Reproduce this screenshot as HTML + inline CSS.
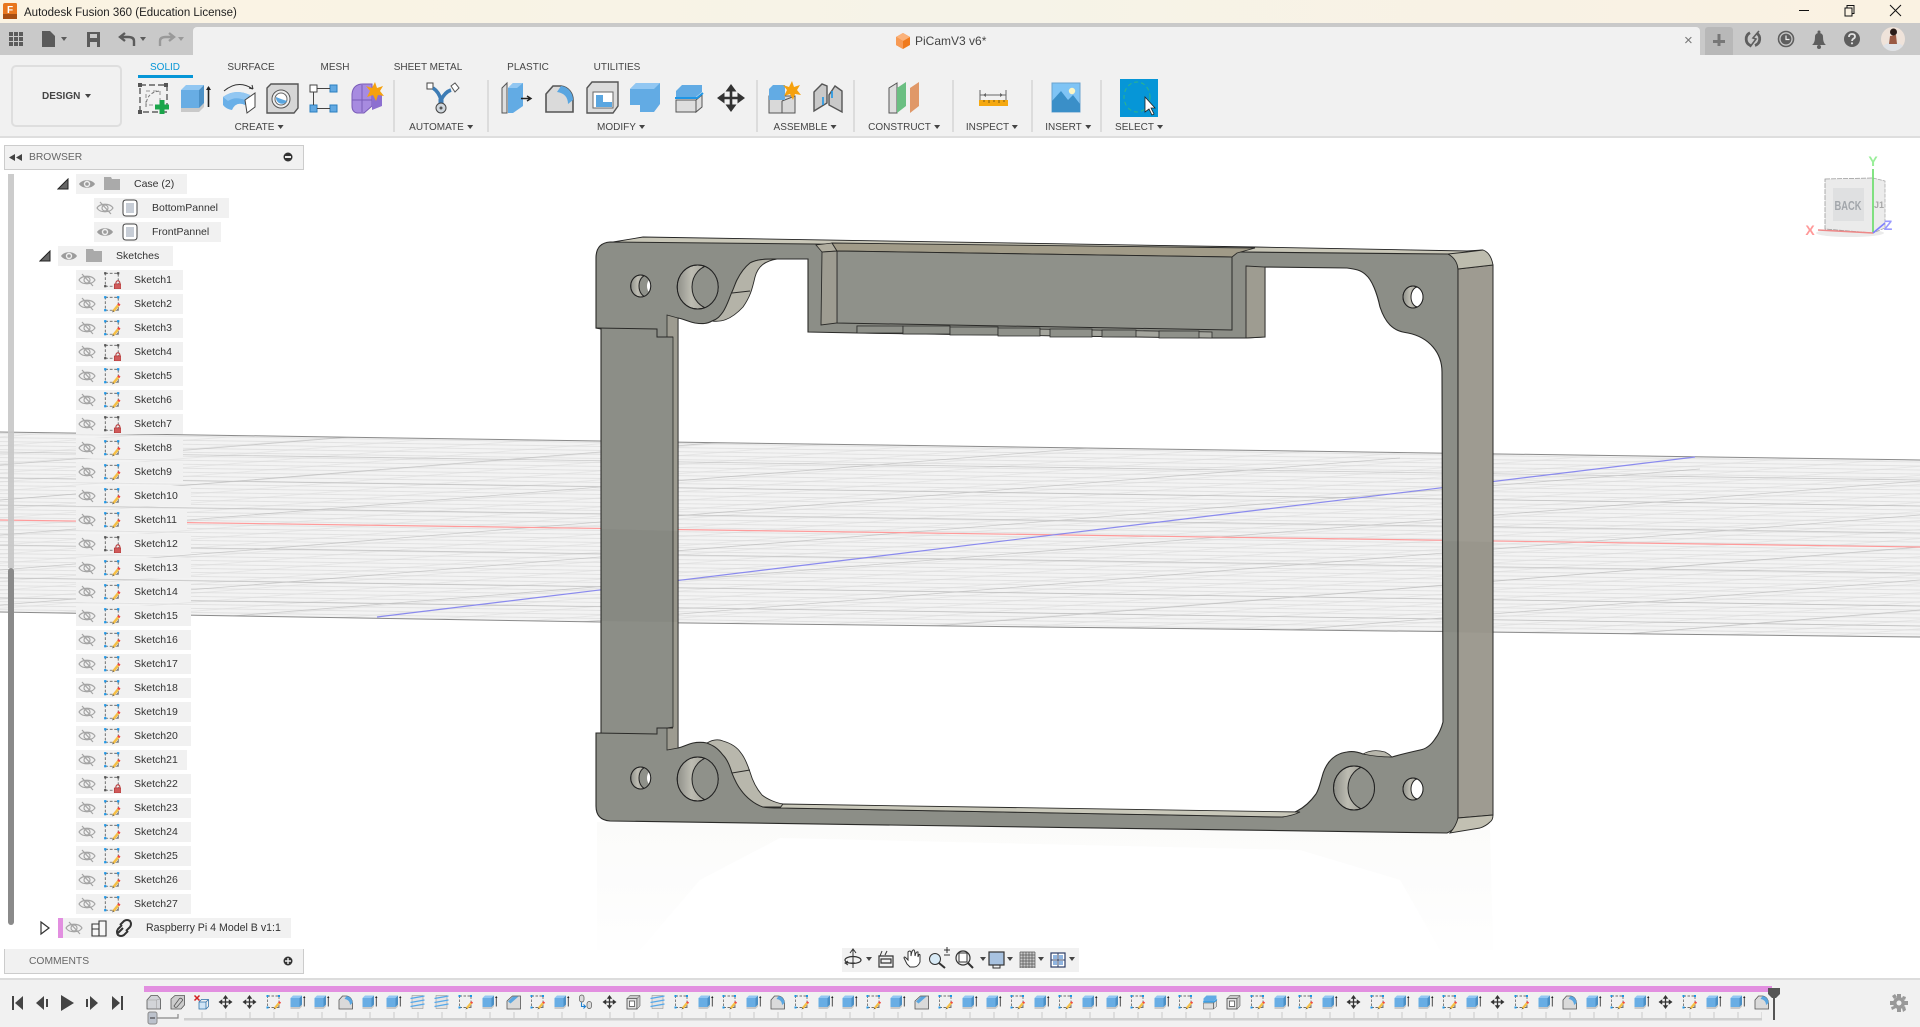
<!DOCTYPE html>
<html><head><meta charset="utf-8"><title>Autodesk Fusion 360 (Education License)</title>
<style>
html,body{margin:0;padding:0;width:1920px;height:1027px;overflow:hidden;background:#fff;font-family:"Liberation Sans",sans-serif}
.a{position:absolute}
svg{position:absolute;left:0;top:0}
.r{position:absolute;height:20px;line-height:21px;background:#f1f1f1;font-size:10.5px;color:#333;white-space:nowrap}
.s{left:76px;padding-left:58px;box-sizing:border-box;width:107px}
.w{width:115px}.v{width:111px}
.t{position:absolute;top:62px;font-size:10px;line-height:12px;color:#444;transform:translateX(-50%);white-space:nowrap}
.l{position:absolute;top:122px;font-size:10px;line-height:12px;color:#444;transform:translateX(-50%);white-space:nowrap}
.c{display:inline-block;width:0;height:0;border-left:3px solid transparent;border-right:3px solid transparent;border-top:4px solid #444;margin-left:3px;vertical-align:1px}
</style></head><body>

<svg width="1920" height="1027" viewBox="0 0 1920 1027">
<defs>
<clipPath id="band"><path d="M0 432L600 441L1920 460V637L600 622L0 612z"/></clipPath>
<pattern id="pa" width="40" height="4" patternUnits="userSpaceOnUse" patternTransform="rotate(0.85)"><rect width="40" height="4" fill="#f3f3f3"/><rect y="1" width="40" height="1" fill="#e2e2e2"/></pattern>
<pattern id="pb" width="40" height="9" patternUnits="userSpaceOnUse" patternTransform="rotate(-4.5)"><rect y="3" width="40" height="1" fill="#dadada" fill-opacity=".5"/></pattern>
<linearGradient id="refl" x1="0" y1="0" x2="0" y2="1"><stop offset="0" stop-color="#fbfbfa"/><stop offset="1" stop-color="#fefefe"/></linearGradient>
<linearGradient id="wall" x1="0" y1="0" x2="1" y2="0"><stop offset="0" stop-color="#8f9089"/><stop offset=".35" stop-color="#bdbcb2"/><stop offset=".7" stop-color="#a3a299"/><stop offset="1" stop-color="#8f9089"/></linearGradient>
<clipPath id="h1"><ellipse cx="697.7" cy="287" rx="20.5" ry="22"/></clipPath>
<clipPath id="h2"><ellipse cx="697.7" cy="779" rx="20.5" ry="22"/></clipPath>
<clipPath id="h3"><ellipse cx="1354" cy="788" rx="20.5" ry="22"/></clipPath>
<clipPath id="s1"><ellipse cx="640.7" cy="286" rx="10" ry="11"/></clipPath>
<clipPath id="s2"><ellipse cx="640.7" cy="778" rx="10" ry="11"/></clipPath>
<clipPath id="s3"><ellipse cx="1413" cy="297" rx="10" ry="11"/></clipPath>
<clipPath id="s4"><ellipse cx="1413" cy="789" rx="10" ry="11"/></clipPath>
</defs>

<!-- ground grid -->
<g clip-path="url(#band)">
<rect x="0" y="420" width="1920" height="230" fill="url(#pa)"/>
<rect x="0" y="420" width="1920" height="230" fill="url(#pb)"/>
<g stroke="#a8a8a8" stroke-width=".8" fill="none" opacity=".55">
<path d="M0 465L500 425M0 500L800 436M0 535L1100 447M0 570L1400 458M0 605L1700 469M120 625L1920 481M480 630L1920 515M860 632L1920 547M1240 634L1920 580M1600 636L1920 610"/>
<path d="M0 452L1920 480M0 478L1920 506M0 505L1920 533M0 545L1920 573M0 578L1920 606M0 598L1920 626"/>
</g>
</g>
<path d="M0 432L600 441L1920 460" fill="none" stroke="#8a8a8a" stroke-width="1"/>
<path d="M0 612L600 622L1920 637" fill="none" stroke="#8a8a8a" stroke-width="1"/>
<path d="M0 520L1920 547" stroke="#ff9a9a" stroke-width="1.2" fill="none"/>
<path d="M377 617L1695 457" stroke="#8a8aee" stroke-width="1.2" fill="none"/>

<!-- reflection -->
<path d="M597 822L1490 830L1493 950L1440 950L1400 880L1300 850L780 838L700 880L640 950L597 950z" fill="url(#refl)"/>

<!-- top surface -->
<path d="M607 243L643 237L1255 247L1467 251L1483 250L1448 255z" fill="#c9c7b8" stroke="#222" stroke-width=".9"/>
<!-- front face -->
<path fill-rule="evenodd" fill="#8c8e87" stroke="#2a2a28" stroke-width="1.1" d="M596 258Q596 243 610 242L813 244L1237 252L1448 254Q1458 258 1458 270L1458 818Q1457 829 1447 833L610 821Q596 820 596 806L596 733L601 733L601 329L596 328z
M678 318C684 319 689 322 695 323C702 324 707 324 712 321C718 319 720 316 723 312C727 306 729 299 732 292C734 288 735 284 737 280C741 272 745 267 750 263C757 259 767 259 777 259L808 259L808 332L857 333L1212 338L1246 338L1265 337L1265 267L1347 268C1355 269 1361 270 1366 275C1372 280 1377 293 1380 307C1383 316 1386 321 1390 325C1396 331 1402 332 1408 333C1418 335 1427 340 1433 347C1439 354 1442 362 1442 372L1443 722C1441 730 1438 735 1435 739C1431 745 1426 749 1420 750C1411 752 1402 754 1392 757C1384 756 1374 755 1363 754C1358 752 1352 751 1347 752C1339 753 1333 757 1329 762C1325 767 1323 773 1322 777C1320 784 1319 789 1316 794C1311 801 1305 807 1297 811C1293 813 1288 816 1282 817L780 808C773 808 768 808 763 807C754 804 746 797 741 790C737 785 734 778 732 773C730 766 727 759 723 755C717 747 712 745 707 743C702 742 698 742 693 743C688 744 683 747 678 748z"/>

<!-- left strip details -->
<path d="M667 315L678 318V748L667 750V728L673 727V337H667z" fill="#9d9b90" stroke="#2a2a28" stroke-width=".8"/>
<path d="M596 328L657 329V337H673M596 733L657 734V728H673" fill="none" stroke="#2a2a28" stroke-width="1"/>
<path d="M601 329V733" stroke="#2a2a28" stroke-width="1"/>
<!-- fillet walls -->
<path d="M712 321C720 322 730 321 743 307C750 297 752 290 755 277C758 266 765 261 777 259C767 259 757 259 750 263C745 267 741 272 737 280C735 284 734 288 732 292C729 299 727 306 723 312C720 316 718 319 712 321Z" fill="#b4b3a8" stroke="#2a2a28" stroke-width=".9"/>
<path d="M732 293L750 291" stroke="#2a2a28" stroke-width=".9"/>
<path d="M707 743C712 740 718 739 723 741C730 743 737 747 741 753C745 758 748 766 750 772C752 779 756 788 762 795C767 799 776 803 783 804L786 807L763 807C754 804 746 797 741 790C737 785 734 778 732 773C730 766 727 759 723 755C717 747 712 745 707 743Z" fill="#b8b7ac" stroke="#2a2a28" stroke-width=".9"/>
<path d="M732 773L750 770" stroke="#2a2a28" stroke-width=".9"/>
<!-- bottom inner light strip -->
<path d="M783 804L1300 812C1296 814 1290 816 1282 817L780 808z" fill="#c9c8ba" stroke="#2a2a28" stroke-width=".9"/>
<!-- bottom right small wall -->
<path d="M1363 754C1370 750 1378 750 1385 752C1389 754 1391 756 1392 757C1384 757 1372 756 1363 754Z" fill="#b8b7ac" stroke="#2a2a28" stroke-width=".8"/>

<!-- slot -->
<path d="M816 245L832 243L837 251L822 252z" fill="#b0ad9e" stroke="#2a2a28" stroke-width=".8"/>
<path d="M832 243L1255 248L1237 253L1232 257L837 251z" fill="#a19b88" stroke="#2a2a28" stroke-width=".9"/>
<path d="M837 251L1232 257V330L837 323z" fill="#8f918a" stroke="#2a2a28" stroke-width="1"/>
<path d="M822 252L837 251V323L821 325z" fill="#9e9c91" stroke="#2a2a28" stroke-width=".9"/>
<path d="M1246 266L1265 267V337L1246 338z" fill="#9e9c91" stroke="#2a2a28" stroke-width=".9"/>
<!-- teeth -->
<path d="M857 326L1212 332V338L857 333z" fill="#a4a59d" stroke="#2a2a28" stroke-width=".8"/>
<g fill="#8f918a" stroke="#2a2a28" stroke-width=".8">
<path d="M857 326H903V333H857z"/><path d="M903 326H950V334H903z"/><path d="M950 327H998V335H950z"/><path d="M998 328H1040V336H998z"/><path d="M1050 329H1092V337H1050z"/><path d="M1102 330H1136V337H1102z"/><path d="M1159 331H1199V338H1159z"/>
</g>
<!-- right wall -->
<path d="M1458 269L1493 265V815L1458 818z" fill="#9e9b91" stroke="#2a2a28" stroke-width="1"/>
<path d="M1448 254L1467 252L1483 250Q1491 253 1493 265L1458 269Q1457 259 1448 254z" fill="#bdbcae" stroke="#2a2a28" stroke-width=".9"/>
<path d="M1458 818L1493 815Q1493 820 1490 822Q1486 826 1480 828L1450 833Q1456 826 1458 818z" fill="#c2c0b2" stroke="#2a2a28" stroke-width=".9"/>

<!-- ground through model -->
<path d="M601 529L678 531V622L601 621z" fill="#000" opacity=".035"/>
<path d="M1443 541L1493 542V633L1443 632z" fill="#000" opacity=".03"/>

<!-- holes -->
<g stroke="#222" stroke-width="1">
<ellipse cx="697.7" cy="287" rx="20.5" ry="22" fill="url(#wall)"/><ellipse cx="712" cy="287" rx="20" ry="22" fill="#8f918a" clip-path="url(#h1)"/><ellipse cx="697.7" cy="287" rx="20.5" ry="22" fill="none"/>
<ellipse cx="697.7" cy="779" rx="20.5" ry="22" fill="url(#wall)"/><ellipse cx="712" cy="779" rx="20" ry="22" fill="#8f918a" clip-path="url(#h2)"/><ellipse cx="697.7" cy="779" rx="20.5" ry="22" fill="none"/>
<ellipse cx="1354" cy="788" rx="20.5" ry="22" fill="url(#wall)"/><ellipse cx="1368" cy="788" rx="20" ry="22" fill="#8f918a" clip-path="url(#h3)"/><ellipse cx="1354" cy="788" rx="20.5" ry="22" fill="none"/>
<ellipse cx="640.7" cy="286" rx="10" ry="11" fill="url(#wall)"/><ellipse cx="647" cy="286" rx="8" ry="11" fill="#8f918a" clip-path="url(#s1)"/><ellipse cx="653" cy="286" rx="6" ry="8" fill="#fff" stroke="none" clip-path="url(#s1)"/><ellipse cx="640.7" cy="286" rx="10" ry="11" fill="none"/>
<ellipse cx="640.7" cy="778" rx="10" ry="11" fill="url(#wall)"/><ellipse cx="647" cy="778" rx="8" ry="11" fill="#8f918a" clip-path="url(#s2)"/><ellipse cx="653" cy="778" rx="6" ry="8" fill="#fff" stroke="none" clip-path="url(#s2)"/><ellipse cx="640.7" cy="778" rx="10" ry="11" fill="none"/>
<ellipse cx="1413" cy="297" rx="10" ry="11" fill="url(#wall)"/><ellipse cx="1418" cy="297" rx="7" ry="10" fill="#fff" clip-path="url(#s3)"/><ellipse cx="1413" cy="297" rx="10" ry="11" fill="none"/>
<ellipse cx="1413" cy="789" rx="10" ry="11" fill="url(#wall)"/><ellipse cx="1418" cy="789" rx="7" ry="10" fill="#fff" clip-path="url(#s4)"/><ellipse cx="1413" cy="789" rx="10" ry="11" fill="none"/>
</g>

<!-- viewcube -->
<ellipse cx="1850" cy="233" rx="34" ry="4" fill="#000" opacity=".08"/>
<path d="M1873 178L1885 181V228L1873 233z" fill="#ececec" stroke="#aaa" stroke-width=".8" stroke-dasharray="4 1"/>
<path d="M1825 179L1873 178V233L1825 229z" fill="#ebebeb" stroke="#9a9a9a" stroke-width=".8" stroke-dasharray="5 1"/>
<rect x="1833" y="188" width="31" height="33" fill="#dfe0e1"/>
<text x="1848" y="210" font-size="13" font-weight="bold" fill="#a2a6ab" text-anchor="middle" textLength="27" lengthAdjust="spacingAndGlyphs" font-family="Liberation Sans">BACK</text>
<text x="1879" y="208" font-size="9" font-weight="bold" fill="#a8a8a8" text-anchor="middle" font-family="Liberation Sans">J1</text>
<path d="M1873 233V169" stroke="#66dd66" stroke-width="1.6"/>
<path d="M1818 230L1873 233" stroke="#ee8888" stroke-width="1.6"/>
<path d="M1873 233L1885 223" stroke="#7f7fff" stroke-width="1.6"/>
<text x="1873" y="166" font-size="14" font-weight="bold" fill="#99ee99" text-anchor="middle" font-family="Liberation Sans">Y</text>
<text x="1810" y="235" font-size="14" font-weight="bold" fill="#ff9999" text-anchor="middle" font-family="Liberation Sans">X</text>
<text x="1888" y="230" font-size="14" font-weight="bold" fill="#9999ff" text-anchor="middle" font-family="Liberation Sans">Z</text>
</svg>

<!-- top chrome -->
<div class="a" style="left:0;top:0;width:1920px;height:23px;background:linear-gradient(90deg,#fbf3e2,#f6f3e8 50%,#faf2e2)"></div>
<div class="a" style="left:24px;top:6px;font-size:11.5px;line-height:15px;color:#222">Autodesk Fusion 360 (Education License)</div>
<div class="a" style="left:0;top:23px;width:1920px;height:32px;background:#c9c9c9"></div>
<div class="a" style="left:193px;top:27px;width:1507px;height:28px;background:#f1f1f1;border-radius:4px 4px 0 0"></div>
<div class="a" style="left:1705px;top:27px;width:28px;height:28px;background:#b8b8b8;border-radius:3px 3px 0 0"></div>
<div class="a" style="left:0;top:55px;width:1920px;height:81px;background:#f1f1f1;border-bottom:2px solid #dedede"></div>
<div class="a" style="left:915px;top:34px;font-size:12px;line-height:14px;color:#444">PiCamV3 v6*</div>
<div class="a" style="left:1684px;top:34px;font-size:15px;line-height:14px;color:#777">×</div>

<div class="t" style="left:165px;color:#0696d7">SOLID</div>
<div class="t" style="left:251px">SURFACE</div>
<div class="t" style="left:335px">MESH</div>
<div class="t" style="left:428px">SHEET METAL</div>
<div class="t" style="left:528px">PLASTIC</div>
<div class="t" style="left:617px">UTILITIES</div>
<div class="a" style="left:138px;top:75px;width:55px;height:3px;background:#0696d7"></div>

<div class="a" style="left:11px;top:65px;width:107px;height:58px;border:2px solid #dedede;border-radius:5px"></div>
<div class="a" style="left:42px;top:91px;font-size:10px;font-weight:bold;line-height:12px;color:#444">DESIGN<i class="c" style="margin-left:5px"></i></div>

<div class="l" style="left:259px">CREATE<i class="c"></i></div>
<div class="l" style="left:441px">AUTOMATE<i class="c"></i></div>
<div class="l" style="left:621px">MODIFY<i class="c"></i></div>
<div class="l" style="left:805px">ASSEMBLE<i class="c"></i></div>
<div class="l" style="left:904px">CONSTRUCT<i class="c"></i></div>
<div class="l" style="left:992px">INSPECT<i class="c"></i></div>
<div class="l" style="left:1068px">INSERT<i class="c"></i></div>
<div class="l" style="left:1139px">SELECT<i class="c"></i></div>

<!-- browser -->
<div class="a" style="left:4px;top:145px;width:298px;height:23px;background:#f1f1f1;border:1px solid #ccc;box-sizing:content-box"></div>
<div class="a" style="left:29px;top:151px;font-size:10.3px;line-height:13px;color:#666">BROWSER</div>
<div class="a" style="left:8px;top:174px;width:6px;height:394px;background:#c6c6c6;opacity:.9"></div>
<div class="a" style="left:8px;top:568px;width:6px;height:357px;background:#8a8a8a;border-radius:3px"></div>

<div class="r" style="left:76px;top:174px;width:111px;padding-left:58px;box-sizing:border-box">Case (2)</div>
<div class="r" style="left:94px;top:198px;width:135px;padding-left:58px;box-sizing:border-box">BottomPannel</div>
<div class="r" style="left:94px;top:222px;width:127px;padding-left:58px;box-sizing:border-box">FrontPannel</div>
<div class="r" style="left:58px;top:246px;width:115px;padding-left:58px;box-sizing:border-box">Sketches</div>

<div class="r s" style="top:270px">Sketch1</div>
<div class="r s" style="top:294px">Sketch2</div>
<div class="r s" style="top:318px">Sketch3</div>
<div class="r s" style="top:342px">Sketch4</div>
<div class="r s" style="top:366px">Sketch5</div>
<div class="r s" style="top:390px">Sketch6</div>
<div class="r s" style="top:414px">Sketch7</div>
<div class="r s" style="top:438px">Sketch8</div>
<div class="r s" style="top:462px">Sketch9</div>
<div class="r s w" style="top:486px">Sketch10</div>
<div class="r s v" style="top:510px">Sketch11</div>
<div class="r s w" style="top:534px">Sketch12</div>
<div class="r s w" style="top:558px">Sketch13</div>
<div class="r s w" style="top:582px">Sketch14</div>
<div class="r s w" style="top:606px">Sketch15</div>
<div class="r s w" style="top:630px">Sketch16</div>
<div class="r s w" style="top:654px">Sketch17</div>
<div class="r s w" style="top:678px">Sketch18</div>
<div class="r s w" style="top:702px">Sketch19</div>
<div class="r s w" style="top:726px">Sketch20</div>
<div class="r s v" style="top:750px">Sketch21</div>
<div class="r s w" style="top:774px">Sketch22</div>
<div class="r s w" style="top:798px">Sketch23</div>
<div class="r s w" style="top:822px">Sketch24</div>
<div class="r s w" style="top:846px">Sketch25</div>
<div class="r s w" style="top:870px">Sketch26</div>
<div class="r s w" style="top:894px">Sketch27</div>
<div class="r" style="left:58px;top:918px;width:233px;padding-left:88px;box-sizing:border-box;font-size:10.6px">Raspberry Pi 4 Model B v1:1</div>
<div class="a" style="left:58px;top:918px;width:5px;height:20px;background:#e28fe0"></div>

<div class="a" style="left:4px;top:949px;width:298px;height:24px;background:#f1f1f1;border:1px solid #ccc;border-top:0"></div>
<div class="a" style="left:29px;top:955px;font-size:10.3px;line-height:13px;color:#666">COMMENTS</div>

<!-- nav bar -->
<div class="a" style="left:842px;top:948px;width:237px;height:24px;background:#f1f1f1"></div>

<!-- timeline -->
<div class="a" style="left:0;top:978px;width:1920px;height:49px;background:#f1f1f1;border-top:2px solid #dcdcdc;box-sizing:border-box"></div>
<div class="a" style="left:144px;top:986px;width:1628px;height:6px;background:#e28fe0"></div>

<svg width="1920" height="1027" viewBox="0 0 1920 1027">
<defs>
<symbol id="ex" viewBox="0 0 32 32"><path d="M2 25h18l5-5v5l-5 5H2z" fill="#c9c9c9"/><path d="M2 8h18v18H2z" fill="#68ade4"/><path d="M2 8l5-5h18l-5 5z" fill="#92c7f2"/><path d="M20 8l5-5v18l-5 5z" fill="#4b90c6"/><path d="M29.5 25V5" stroke="#222" stroke-width="1.6"/><path d="M27 8l2.5-4 2.5 4z" fill="#222"/></symbol>
<symbol id="sk" viewBox="0 0 32 32"><path d="M4 4H27V27H4z" fill="none" stroke="#444" stroke-width="1.3" stroke-dasharray="5 3"/><g fill="#1e96e6"><rect x="2" y="2" width="4" height="4"/><rect x="25" y="2" width="4" height="4"/><rect x="2" y="25" width="4" height="4"/></g><rect x="25" y="25" width="3" height="3" fill="#777"/><path d="M28 17L18 29" stroke="#f5bf46" stroke-width="4.4"/><path d="M26.5 15.5L30 18.5" stroke="#ef4444" stroke-width="3.5"/><path d="M18 27l2 2-4 2z" fill="#555"/></symbol>
<symbol id="sl" viewBox="0 0 32 32"><path d="M4 4H27V27H4z" fill="none" stroke="#444" stroke-width="1.3" stroke-dasharray="5 3"/><g fill="#555"><rect x="2" y="2" width="4" height="4"/><rect x="25" y="2" width="4" height="4"/><rect x="2" y="25" width="4" height="4"/></g><path d="M23 24v-3a3.5 3.5 0 0 1 7 0v3" fill="none" stroke="#b94040" stroke-width="2"/><rect x="20" y="23" width="12" height="9" fill="#d05a5a" stroke="#a83030"/></symbol>
<symbol id="fi" viewBox="0 0 32 32"><path d="M3 30V12L10 4H18C26 5 30 12 30 18V30z" fill="#dadada" stroke="#555" stroke-width="1.6"/><path d="M18 4C26 5 30 12 30 18L25 22C25 15 21 11 14 10z" fill="#5aa6e0"/></symbol>
<symbol id="ch" viewBox="0 0 32 32"><path d="M3 30V14L14 4H30V30z" fill="#dadada" stroke="#555" stroke-width="1.6"/><path d="M5 15L15 5H26L10 19z" fill="#5aa6e0"/></symbol>
<symbol id="mv" viewBox="0 0 32 32"><path d="M16 2L21.5 9.500H10.500zM16 30L10.500 22.500H21.500zM2 16L9.500 10.500V21.500zM30 16L22.500 21.500V10.500z" fill="#333"/><path d="M16 8V24M8 16H24" stroke="#333" stroke-width="2.6"/></symbol>
<symbol id="co" viewBox="0 0 32 32"><rect x="5" y="3" width="22" height="26" fill="#e4e4e4" stroke="#888"/><path d="M2 9L30 4M2 17L30 12M2 25L30 20" stroke="#55a8ea" stroke-width="2.4"/></symbol>
<symbol id="sh" viewBox="0 0 32 32"><path d="M3 9H23V30H3z" fill="#e2e2e2" stroke="#444" stroke-width="1.6"/><path d="M8 14H18V25H8z" fill="#fff" stroke="#444" stroke-width="1.4"/><path d="M3 9L9 3H29L23 9zM23 9L29 3V24L23 30z" fill="#c8c8c8" stroke="#444"/></symbol>
<symbol id="sp" viewBox="0 0 32 32"><path d="M4 18H24V30H4zM24 18L30 13V25L24 30z" fill="#dedede" stroke="#555"/><path d="M4 9L10 3H30V10L24 15H4z" fill="#62abe4"/><path d="M3 16H25L31 11" stroke="#1e96e6" stroke-width="2" fill="none"/></symbol>
<symbol id="bx" viewBox="0 0 32 32"><path d="M3 30V12L11 3H24L30 10V30z" fill="#d2d4d8" stroke="#555" stroke-width="1.6"/><path d="M3 12H22V30M22 12L30 10" fill="none" stroke="#999"/></symbol>
<symbol id="de" viewBox="0 0 32 32"><path d="M3 30V10L11 3H30V22L23 30z" fill="#ccc" stroke="#555" stroke-width="1.6"/><path d="M9 24L20 9a4 4 0 0 1 6 4L15 26a4 4 0 0 1-6-2z" fill="none" stroke="#555" stroke-width="1.6"/></symbol>
<symbol id="xb" viewBox="0 0 32 32"><path d="M2 3L12 13M12 3L2 13" stroke="#d32020" stroke-width="3"/><path d="M11 16H25V30H11z" fill="#cfe4f5" stroke="#2a6ea6" stroke-width="1.5"/><path d="M11 16L16 11H30V25L25 30M25 16L30 11" fill="none" stroke="#2a6ea6" stroke-width="1.5"/></symbol>
<symbol id="jo" viewBox="0 0 32 32"><rect x="4" y="2" width="9" height="14" rx="4.5" fill="#dadada" stroke="#555" stroke-width="1.4"/><rect x="19" y="15" width="9" height="14" rx="4.5" fill="#dadada" stroke="#555" stroke-width="1.4"/><path d="M8 17V25H15M12 21L16 25L12 29" fill="none" stroke="#1e80d0" stroke-width="2.2"/></symbol>
<symbol id="eye" viewBox="0 0 18 18"><path d="M1 9C4 4 14 4 17 9C14 14 4 14 1 9Z" fill="#9c9c9c"/><circle cx="9" cy="9" r="3.2" fill="#f1f1f1"/><circle cx="9" cy="9" r="1.8" fill="#9c9c9c"/></symbol>
<symbol id="eo" viewBox="0 0 18 18"><path d="M1 9C4 4 14 4 17 9C14 14 4 14 1 9Z" fill="none" stroke="#a4a4a4" stroke-width="1.2"/><circle cx="9" cy="9" r="3" fill="none" stroke="#a4a4a4" stroke-width="1.2"/><path d="M4 3L15 15" stroke="#a4a4a4" stroke-width="1.2"/></symbol>
<symbol id="fo" viewBox="0 0 18 18"><path d="M1 2H8L9 4H17V15H1z" fill="#aaa"/></symbol>
<symbol id="bo" viewBox="0 0 18 18"><path d="M2 4Q2 1 5 1H13Q16 1 16 4V14Q16 17 13 17H5Q2 17 2 14z" fill="#fff" stroke="#444" stroke-width="1"/><path d="M5 4H13V14H5z" fill="#c7cdd6"/></symbol>
<symbol id="tri" viewBox="0 0 12 12"><path d="M11 1V11H1z" fill="#666" stroke="#222" stroke-width="1"/></symbol>
</defs>

<!-- fusion logo -->
<path d="M3 5Q3 3 5 3H16Q17 3 17 5V17Q17 19 15 19H5Q3 19 3 17z" fill="#e8761e"/><rect x="3" y="14" width="14" height="5" fill="#a84e12"/><text x="10" y="13" font-size="10" font-weight="bold" fill="#fff" text-anchor="middle" font-family="Liberation Sans">F</text>
<!-- window controls -->
<path d="M1799 10.5H1809" stroke="#111" stroke-width="1"/>
<path d="M1845 8H1852V16H1845zM1847 8V5.5H1854V13.5H1852" fill="none" stroke="#111"/>
<path d="M1890 5L1901 16M1901 5L1890 16" stroke="#111" stroke-width="1"/>
<!-- qat -->
<g fill="#5b5b5b">
<g><rect x="9" y="32" width="4" height="4"/><rect x="14" y="32" width="4" height="4"/><rect x="19" y="32" width="4" height="4"/><rect x="9" y="37" width="4" height="4"/><rect x="14" y="37" width="4" height="4"/><rect x="19" y="37" width="4" height="4"/><rect x="9" y="42" width="4" height="4"/><rect x="14" y="42" width="4" height="4"/><rect x="19" y="42" width="4" height="4"/></g>
<path d="M42 31H50L55 36V47H42z"/><path d="M61 37H67L64 41z"/>
<path d="M87 32H100V47H87zM90 34V38H97V34zM90 42V47H97V42z" fill-rule="evenodd"/>
<path d="M140 37H146L143 41z"/>
<path d="M178 37H184L181 41z" fill="#999"/>
</g>
<path d="M134 46V41Q134 37 128 37H122M125 33L120 37L125 41" fill="none" stroke="#5b5b5b" stroke-width="2.4"/>
<path d="M160 46V41Q160 37 166 37H172M169 33L174 37L169 41" fill="none" stroke="#999" stroke-width="2.4"/>
<!-- doc cube -->
<path d="M903 33L910 37V45L903 49L896 45V37z" fill="#f07a1c"/><path d="M903 33L910 37L903 41L896 37z" fill="#fbb27a"/><path d="M903 41V49L896 45V37z" fill="#f79a54"/>
<!-- right header icons -->
<path d="M1719 34V46M1713 41.5H1725" stroke="#777" stroke-width="3"/>
<path d="M1750 32.800A7 7 0 0 0 1750.500 45.500M1756.500 33A7 7 0 0 1 1755 45.500" fill="none" stroke="#5e5e5e" stroke-width="2.800"/><path d="M1759 31L1753 38L1756 39L1750 47" fill="none" stroke="#5e5e5e" stroke-width="1.600"/>
<circle cx="1786" cy="39" r="7.5" fill="none" stroke="#5e5e5e" stroke-width="1.6"/><circle cx="1786" cy="39" r="5.4" fill="#5e5e5e"/><path d="M1786 35.5V39.5H1789.5" stroke="#eee" stroke-width="1.2" fill="none"/>
<path d="M1812 45Q1815 43 1815 37Q1815 33 1819 33Q1823 33 1823 37Q1823 43 1826 45z" fill="#5e5e5e"/><circle cx="1819" cy="47" r="2" fill="#5e5e5e"/><circle cx="1819" cy="32" r="1.5" fill="#5e5e5e"/>
<circle cx="1852" cy="39" r="8" fill="#5e5e5e"/><path d="M1849 37Q1849 34 1852 34Q1855 34 1855 36.5Q1855 38 1853 39Q1852 40 1852 41" fill="none" stroke="#e2e2e2" stroke-width="1.8"/><circle cx="1852" cy="43.3" r="1.1" fill="#e2e2e2"/>
<circle cx="1893" cy="39" r="12" fill="#efe3da"/><path d="M1883 46Q1893 38 1903 46Q1898 51 1893 51Q1887 51 1883 46z" fill="#dfe2e6"/><path d="M1890 36L1896 35L1897 44L1889 44z" fill="#9a5a44"/><circle cx="1893.500" cy="32" r="3.500" fill="#2a1c18"/>

<!-- toolbar icons -->
<g>
<path d="M140 85H167V112H140z" fill="none" stroke="#444" stroke-width="1.2" stroke-dasharray="6 3"/><path d="M146 107Q146 92 160 91" fill="none" stroke="#777" stroke-dasharray="3 2"/><path d="M146 91H160V105H146z" fill="none" stroke="#777" stroke-width=".8" stroke-dasharray="4 3"/><g fill="#555"><rect x="138" y="83" width="4" height="4"/><rect x="164" y="83" width="4" height="4"/><rect x="138" y="110" width="4" height="4"/></g><path d="M159.500 100H164.500V104.500H169V109.500H164.500V114H159.500V109.500H155V104.500H159.500z" fill="#1aa54a"/>
<use href="#ex" x="179" y="82" width="32" height="32"/>
<path d="M223 97Q235 88 250 95L245 105Q236 101 232 110Q226 109 223 105z" fill="#6ab0e8"/><path d="M223 97Q235 88 250 95L245 100Q235 96 228 101z" fill="#92c7f2"/><path d="M245 100L255 93V107L247 113z" fill="#fff" stroke="#444"/><path d="M224 91Q238 79 253 89M253 89l-4-1M253 89l-1-4" fill="none" stroke="#333"/>
<path d="M267 88L271 84H298V108L294 113H267z" fill="#d6d6d6" stroke="#555" stroke-width="1.4"/><circle cx="281" cy="99" r="9" fill="#eee" stroke="#555"/><circle cx="281" cy="99" r="6" fill="#fff" stroke="#666"/><path d="M276 97A6 6 0 0 0 287 101L281 99z" fill="#5aa6e0"/>
<rect x="310" y="85" width="7" height="7" fill="#fff" stroke="#444"/><rect x="330" y="85" width="7" height="7" fill="#62a9e2" stroke="#2a80c0"/><rect x="310" y="105" width="7" height="7" fill="#62a9e2" stroke="#2a80c0"/><rect x="330" y="105" width="7" height="7" fill="#62a9e2" stroke="#2a80c0"/><path d="M317 88.500H330M313.500 92V105M317 108.500H330" stroke="#444"/>
<path d="M352 94Q353 84 363 84H372V106L364 113H357Q352 112 352 106z" fill="#a78be0" stroke="#7a5cb8"/><path d="M352 100H372M362 85V112" stroke="#7a5cb8"/><path d="M372 92L382 95V106L372 110z" fill="#8c6fd0"/><path d="M375 82L377 88L383 86L380 91L384 96L378 95L376 101L373 95L367 97L370 91L366 86L372 88z" fill="#f5a10e"/>
<rect x="427" y="83" width="6" height="6" fill="#fff" stroke="#444"/><path d="M433 88Q439 92 441 100M451 90Q445 92 441 100" fill="none" stroke="#3d7cb5" stroke-width="3.600"/><path d="M441 99V104" stroke="#3d7cb5" stroke-width="5"/><path d="M451 86L455 83L459 88L455 92z" fill="#fff" stroke="#555"/><circle cx="441" cy="108" r="5" fill="#cfd6dc" stroke="#444"/><circle cx="441" cy="108" r="1.500" fill="#555"/>
<path d="M502 88L507 83V113H502z" fill="#dedede" stroke="#555"/><path d="M508 88L513 83H523V106L513 113H508z" fill="#62abe4"/><path d="M513 83L523 83L517 88H508z" fill="#92c7f2"/><path d="M521 98.500H530M527 96L531 98.500L527 101" stroke="#222" fill="none" stroke-width="1.4"/>
<use href="#fi" x="543" y="82" width="32" height="32"/>
<path d="M587 88L592 82H618V106L613 113H587z" fill="#dcdcdc" stroke="#555" stroke-width="1.4"/><path d="M593 92H613V108H593z" fill="#fff" stroke="#666"/><path d="M596 95H603V102H612V107H596z" fill="#5aa6e0"/>
<path d="M630 89L636 83H660V104L654 112H640V105H630z" fill="#62abe4"/><path d="M636 83H660L654 89H630z" fill="#92c7f2"/>
<use href="#sp" x="672" y="82" width="32" height="32"/>
<use href="#mv" x="715" y="82" width="32" height="32"/>
<path d="M769 96V113H795V96L784 96z" fill="#d9d9d9" stroke="#555"/><path d="M782 101V113M782 101L795 96" stroke="#555" fill="none"/><path d="M769 89L773 85H785V100H769z" fill="#62abe4"/><path d="M792 81L794 87L800 85L797 90L801 95L795 94L793 100L790 94L784 96L787 90L783 85L789 87z" fill="#f5a10e"/>
<path d="M814 92L822 84L827 86V103L814 111z" fill="#c9c9c9" stroke="#555" stroke-width="1.400"/><path d="M835 86L842 91V112L829 105V95z" fill="#c9c9c9" stroke="#555" stroke-width="1.400"/><path d="M823 97V105M832 91V98" stroke="#1e96e6" stroke-width="1.6"/>
<path d="M889 88L897 83V113H889z" fill="#dedede" stroke="#555"/><path d="M897 88L906 82V106L897 113z" fill="#6bbf82"/><path d="M910 88L919 82V106L910 113z" fill="#e09868"/>
<path d="M980 95H1006M980 90V101M1006 90V101" stroke="#666" stroke-width="1"/><path d="M983 95l3-2v4zM1003 95l-3-2v4z" fill="#666"/><rect x="979" y="100" width="29" height="6" fill="#f5a810"/><path d="M984 100v2M989 100v3M994 100v2M999 100v3M1004 100v2" stroke="#7a5a10"/>
<rect x="1052" y="83" width="28" height="29" fill="#7fc4f5" stroke="#6aa4d0"/><path d="M1052 112V101L1061 91L1068 100L1073 95L1080 104V112z" fill="#3a8fc8"/><circle cx="1072" cy="91" r="3.200" fill="#fbf5c4"/>
<rect x="1120" y="79" width="38" height="38" fill="#0696d7"/><ellipse cx="1137" cy="97" rx="13" ry="15" fill="none" stroke="#2fb48a" stroke-dasharray="4 3"/><path d="M1145 97V112L1149 109L1152 115L1154 114L1151 108L1155 108z" fill="#fff" stroke="#222" stroke-width=".8"/>
</g>
<g stroke="#dcdcdc" stroke-width="2"><path d="M394 80V132M488 80V132M757 80V132M854 80V132M953 80V132M1032 80V132M1101 80V132"/></g>

<!-- panel icons -->
<path d="M15 154L9 157.500L15 161zM22 154L16 157.500L22 161z" fill="#444"/>
<circle cx="288" cy="157" r="4.500" fill="#333"/><rect x="285" y="156" width="6" height="2" fill="#eee"/>
<circle cx="288" cy="961" r="4.500" fill="#333"/><path d="M285 961H291M288 958V964" stroke="#eee" stroke-width="1.400"/>

<use href="#tri" x="57" y="178" width="12" height="12"/>
<use href="#tri" x="39" y="250" width="12" height="12"/>
<path d="M41 922L49 928L41 934z" fill="#fff" stroke="#333" stroke-width="1.200"/>

<use href="#eye" x="78" y="175" width="18" height="18"/><use href="#fo" x="103" y="175" width="18" height="18"/>
<use href="#eo" x="96" y="199" width="18" height="18"/><use href="#bo" x="121" y="199" width="18" height="18"/>
<use href="#eye" x="96" y="223" width="18" height="18"/><use href="#bo" x="121" y="223" width="18" height="18"/>
<use href="#eye" x="60" y="247" width="18" height="18"/><use href="#fo" x="85" y="247" width="18" height="18"/>

<g>
<use href="#eo" x="78" y="271" width="18" height="18"/><use href="#eo" x="78" y="295" width="18" height="18"/><use href="#eo" x="78" y="319" width="18" height="18"/><use href="#eo" x="78" y="343" width="18" height="18"/><use href="#eo" x="78" y="367" width="18" height="18"/><use href="#eo" x="78" y="391" width="18" height="18"/><use href="#eo" x="78" y="415" width="18" height="18"/><use href="#eo" x="78" y="439" width="18" height="18"/><use href="#eo" x="78" y="463" width="18" height="18"/><use href="#eo" x="78" y="487" width="18" height="18"/><use href="#eo" x="78" y="511" width="18" height="18"/><use href="#eo" x="78" y="535" width="18" height="18"/><use href="#eo" x="78" y="559" width="18" height="18"/><use href="#eo" x="78" y="583" width="18" height="18"/><use href="#eo" x="78" y="607" width="18" height="18"/><use href="#eo" x="78" y="631" width="18" height="18"/><use href="#eo" x="78" y="655" width="18" height="18"/><use href="#eo" x="78" y="679" width="18" height="18"/><use href="#eo" x="78" y="703" width="18" height="18"/><use href="#eo" x="78" y="727" width="18" height="18"/><use href="#eo" x="78" y="751" width="18" height="18"/><use href="#eo" x="78" y="775" width="18" height="18"/><use href="#eo" x="78" y="799" width="18" height="18"/><use href="#eo" x="78" y="823" width="18" height="18"/><use href="#eo" x="78" y="847" width="18" height="18"/><use href="#eo" x="78" y="871" width="18" height="18"/><use href="#eo" x="78" y="895" width="18" height="18"/>
</g>
<g>
<use href="#sl" x="103" y="271" width="18" height="18"/><use href="#sk" x="103" y="295" width="18" height="18"/><use href="#sk" x="103" y="319" width="18" height="18"/><use href="#sl" x="103" y="343" width="18" height="18"/><use href="#sk" x="103" y="367" width="18" height="18"/><use href="#sk" x="103" y="391" width="18" height="18"/><use href="#sl" x="103" y="415" width="18" height="18"/><use href="#sk" x="103" y="439" width="18" height="18"/><use href="#sk" x="103" y="463" width="18" height="18"/><use href="#sk" x="103" y="487" width="18" height="18"/><use href="#sk" x="103" y="511" width="18" height="18"/><use href="#sl" x="103" y="535" width="18" height="18"/><use href="#sk" x="103" y="559" width="18" height="18"/><use href="#sk" x="103" y="583" width="18" height="18"/><use href="#sk" x="103" y="607" width="18" height="18"/><use href="#sk" x="103" y="631" width="18" height="18"/><use href="#sk" x="103" y="655" width="18" height="18"/><use href="#sk" x="103" y="679" width="18" height="18"/><use href="#sk" x="103" y="703" width="18" height="18"/><use href="#sk" x="103" y="727" width="18" height="18"/><use href="#sk" x="103" y="751" width="18" height="18"/><use href="#sl" x="103" y="775" width="18" height="18"/><use href="#sk" x="103" y="799" width="18" height="18"/><use href="#sk" x="103" y="823" width="18" height="18"/><use href="#sk" x="103" y="847" width="18" height="18"/><use href="#sk" x="103" y="871" width="18" height="18"/><use href="#sk" x="103" y="895" width="18" height="18"/>
</g>
<use href="#eo" x="65" y="919" width="18" height="18"/>
<path d="M92 924H99V921H106V936H92zM99 921V936M92 929H99" fill="#f7f7f7" stroke="#333" stroke-width="1.100"/>
<path d="M118 933L123 928M120 925L124 921Q127 919 130 921Q132 924 130 927L126 931M128 931L124 935Q121 937 118 935Q116 932 118 929L122 925" fill="none" stroke="#333" stroke-width="2"/>

<!-- nav icons -->
<path d="M853 950V968M850 953L853 949L856 953" fill="none" stroke="#333"/><ellipse cx="853" cy="960" rx="8" ry="3.500" fill="none" stroke="#333" stroke-width="1.200"/><path d="M845 963H855M848 961L845 963L848 965" fill="none" stroke="#333"/>
<g fill="#444"><path d="M866 957H872L869 961zM980 957H986L983 961zM1007 957H1013L1010 961zM1038 957H1044L1041 961zM1069 957H1075L1072 961z"/></g>
<path d="M879 956H893V967H879zM881 959H891V963H881z" fill="none" stroke="#333" stroke-width="1.200"/><path d="M880 956L882 951M885 955L887 951" stroke="#333"/>
<path d="M907 964L904 958Q904 956 906 958L908 960V952Q910 950 911 952V956Q912 949 914 950Q915 951 915 956Q916 951 918 952V957Q919 953 920 955V962Q918 967 914 967H910z" fill="#fff" stroke="#333"/>
<circle cx="935" cy="959" r="5.500" fill="#d8eaf6" stroke="#333"/><path d="M939 963L945 968" stroke="#333" stroke-width="2"/><path d="M944 950H950M947 947V953M944 955H950" stroke="#333"/>
<circle cx="963" cy="958" r="7" fill="none" stroke="#333" stroke-width="1.200"/><rect x="959" y="953" width="8" height="9" fill="#fff" stroke="#333"/><path d="M968 963L973 968" stroke="#333" stroke-width="2"/>
<rect x="989" y="952" width="15" height="13" fill="#a8c2e0" stroke="#333" stroke-width="1.200"/><path d="M993 965V968H1000V965" fill="none" stroke="#333"/>
<rect x="1020" y="952" width="15" height="16" fill="#c9c9c9"/><path d="M1020 952H1035M1020 955H1035M1020 958H1035M1020 961H1035M1020 964H1035M1020 967H1035M1020 952V968M1023 952V968M1026 952V968M1029 952V968M1032 952V968M1035 952V968" stroke="#555" stroke-width=".7"/>
<rect x="1051" y="953" width="14" height="14" fill="#fff" stroke="#2b3d66" stroke-width="1.200"/><path d="M1058 953V967M1051 960H1065" stroke="#2b3d66"/><g fill="#8fb4e0"><rect x="1053" y="955" width="4" height="4"/><rect x="1059" y="955" width="4" height="4"/><rect x="1053" y="961" width="4" height="4"/><rect x="1059" y="961" width="4" height="4"/></g>

<!-- playback -->
<g fill="#444"><path d="M12 996H14V1010H12zM23 996V1010L15 1003z"/><path d="M36 1003L44 996V1010zM46 999H48V1007H46z"/><path d="M61 995L74 1003L61 1011z"/><path d="M86 999H88V1007H86zM90 996L98 1003L90 1010z"/><path d="M112 996L120 1003L112 1010zM121 996H123V1010H121z"/></g>

<!-- ruler -->
<rect x="184" y="1018" width="1578" height="2.500" fill="#cfcfcf"/>
<path d="M201.500 1015H1762" stroke="#c9c9c9" stroke-width="6" stroke-dasharray="1 23" fill="none"/>
<path d="M148 1018H178V1014" fill="none" stroke="#888" stroke-width="1.200"/>
<rect x="148" y="1012" width="9" height="12" rx="2" fill="#bcc2cc" stroke="#8a8a8a"/><path d="M150 1018H155" stroke="#333"/>

<!-- timeline icons -->
<g>
<use href="#bx" x="145.500" y="994" width="16" height="16"/><use href="#de" x="169.500" y="994" width="16" height="16"/><use href="#xb" x="193.500" y="994" width="16" height="16"/><use href="#mv" x="217.500" y="994" width="16" height="16"/><use href="#mv" x="241.500" y="994" width="16" height="16"/><use href="#sk" x="265.500" y="994" width="16" height="16"/><use href="#ex" x="289.500" y="994" width="16" height="16"/><use href="#ex" x="313.500" y="994" width="16" height="16"/><use href="#fi" x="337.500" y="994" width="16" height="16"/><use href="#ex" x="361.500" y="994" width="16" height="16"/><use href="#ex" x="385.500" y="994" width="16" height="16"/><use href="#co" x="409.500" y="994" width="16" height="16"/><use href="#co" x="433.500" y="994" width="16" height="16"/><use href="#sk" x="457.500" y="994" width="16" height="16"/><use href="#ex" x="481.500" y="994" width="16" height="16"/><use href="#ch" x="505.500" y="994" width="16" height="16"/><use href="#sk" x="529.500" y="994" width="16" height="16"/><use href="#ex" x="553.500" y="994" width="16" height="16"/><use href="#jo" x="577.500" y="994" width="16" height="16"/><use href="#mv" x="601.500" y="994" width="16" height="16"/><use href="#sh" x="625.500" y="994" width="16" height="16"/>
<use href="#co" x="649.500" y="994" width="16" height="16"/><use href="#sk" x="673.500" y="994" width="16" height="16"/><use href="#ex" x="697.500" y="994" width="16" height="16"/><use href="#sk" x="721.500" y="994" width="16" height="16"/><use href="#ex" x="745.500" y="994" width="16" height="16"/><use href="#fi" x="769.500" y="994" width="16" height="16"/><use href="#sk" x="793.500" y="994" width="16" height="16"/><use href="#ex" x="817.500" y="994" width="16" height="16"/><use href="#ex" x="841.500" y="994" width="16" height="16"/><use href="#sk" x="865.500" y="994" width="16" height="16"/><use href="#ex" x="889.500" y="994" width="16" height="16"/><use href="#ch" x="913.500" y="994" width="16" height="16"/><use href="#sk" x="937.500" y="994" width="16" height="16"/><use href="#ex" x="961.500" y="994" width="16" height="16"/><use href="#ex" x="985.500" y="994" width="16" height="16"/><use href="#sk" x="1009.500" y="994" width="16" height="16"/><use href="#ex" x="1033.500" y="994" width="16" height="16"/><use href="#sk" x="1057.500" y="994" width="16" height="16"/><use href="#ex" x="1081.500" y="994" width="16" height="16"/><use href="#ex" x="1105.500" y="994" width="16" height="16"/><use href="#sk" x="1129.500" y="994" width="16" height="16"/><use href="#ex" x="1153.500" y="994" width="16" height="16"/><use href="#sk" x="1177.500" y="994" width="16" height="16"/><use href="#sp" x="1201.500" y="994" width="16" height="16"/><use href="#sh" x="1225.500" y="994" width="16" height="16"/><use href="#sk" x="1249.500" y="994" width="16" height="16"/><use href="#ex" x="1273.500" y="994" width="16" height="16"/>
<use href="#sk" x="1297.500" y="994" width="16" height="16"/><use href="#ex" x="1321.500" y="994" width="16" height="16"/><use href="#mv" x="1345.500" y="994" width="16" height="16"/><use href="#sk" x="1369.500" y="994" width="16" height="16"/><use href="#ex" x="1393.500" y="994" width="16" height="16"/><use href="#ex" x="1417.500" y="994" width="16" height="16"/><use href="#sk" x="1441.500" y="994" width="16" height="16"/><use href="#ex" x="1465.500" y="994" width="16" height="16"/><use href="#mv" x="1489.500" y="994" width="16" height="16"/><use href="#sk" x="1513.500" y="994" width="16" height="16"/><use href="#ex" x="1537.500" y="994" width="16" height="16"/><use href="#fi" x="1561.500" y="994" width="16" height="16"/><use href="#ex" x="1585.500" y="994" width="16" height="16"/><use href="#sk" x="1609.500" y="994" width="16" height="16"/><use href="#ex" x="1633.500" y="994" width="16" height="16"/><use href="#mv" x="1657.500" y="994" width="16" height="16"/><use href="#sk" x="1681.500" y="994" width="16" height="16"/><use href="#ex" x="1705.500" y="994" width="16" height="16"/><use href="#ex" x="1729.500" y="994" width="16" height="16"/><use href="#fi" x="1753.500" y="994" width="16" height="16"/>
</g>

<!-- playhead -->
<path d="M1768 988H1780V994L1776 998H1772L1768 994z" fill="#555"/><rect x="1773" y="996" width="2" height="24" fill="#555"/>
<!-- gear -->
<g fill="#999"><circle cx="1899" cy="1003" r="6"/><path d="M1897 994H1901V998H1897zM1897 1008H1901V1012H1897zM1890 1001H1894V1005H1890zM1904 1001H1908V1005H1904zM1892 996L1895 994L1897 997L1894 999zM1903 996L1906 997L1905 1000L1902 998zM1892 1010L1891 1007L1894 1006L1896 1008zM1906 1010L1903 1012L1902 1008L1905 1006z"/></g>
<circle cx="1899" cy="1003" r="2.500" fill="#f1f1f1"/>
</svg>
</body></html>
